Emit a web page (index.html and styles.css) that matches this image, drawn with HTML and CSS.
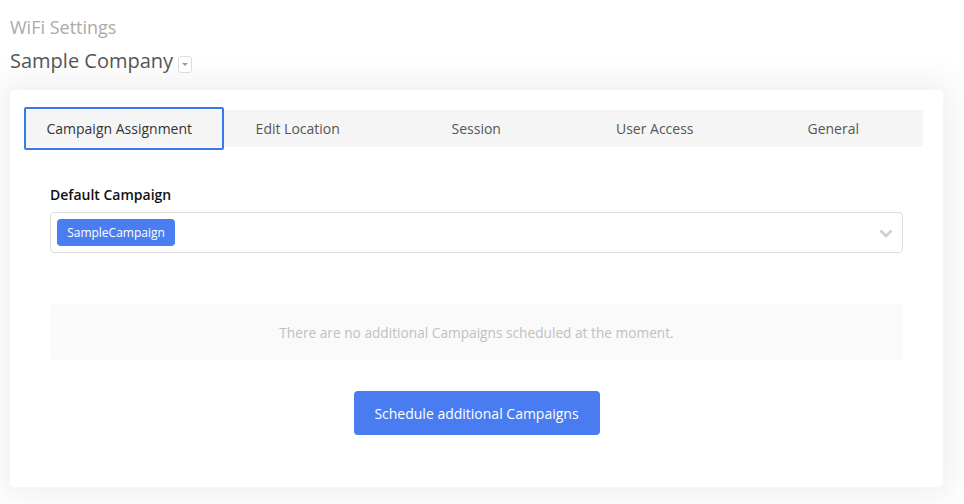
FILE: index.html
```html
<!DOCTYPE html>
<html lang="en">
<head>
    <meta charset="UTF-8">
    <meta name="viewport" content="width=device-width, initial-scale=1.0">
    <title>WiFi Settings</title>
    <link rel="stylesheet" href="styles.css">
</head>
<body>
    <header class="page-head">
        <h1 class="page-title">WiFi Settings</h1>
        <div class="company">
            <span class="company-name">Sample Company</span>
            <button class="company-toggle" type="button" aria-label="Change company"></button>
        </div>
    </header>
    <main class="card">
        <nav class="tabs">
            <a class="tab active" href="#">Campaign Assignment</a>
            <a class="tab" href="#">Edit Location</a>
            <a class="tab" href="#">Session</a>
            <a class="tab" href="#">User Access</a>
            <a class="tab" href="#">General</a>
        </nav>
        <section class="campaign">
            <label class="field-label">Default Campaign</label>
            <div class="select">
                <span class="tag">SampleCampaign</span>
                <svg class="chevron" width="14" height="9" viewBox="0 0 14 9">
                    <path d="M1.5 1.5 L7 7 L12.5 1.5" fill="none" stroke="#cfcfcf" stroke-width="2.6"/>
                </svg>
            </div>
            <p class="empty">There are no additional Campaigns scheduled at the moment.</p>
            <div class="actions">
                <button class="btn-primary" type="button">Schedule additional Campaigns</button>
            </div>
        </section>
    </main>
</body>
</html>
```

FILE: styles.css
```css
* {
  padding: 0;
  margin: 0;
  box-sizing: border-box;
}
html {
  font-family: 'Open Sans', 'Liberation Sans', sans-serif;
  color: #555;
  background-color: #fff;
}
body {
  width: 964px;
  height: 504px;
  overflow: hidden;
  padding: 0 10px;
}
.page-head {
  padding-top: 15px;
}
.page-title {
  font-size: 18px;
  font-weight: 400;
  color: #aaa;
  line-height: 24px;
}
.company {
  display: flex;
  align-items: center;
  margin-top: 8px;
  height: 28px;
}
.company-name {
  font-size: 20px;
  color: #555;
  line-height: 28px;
}
.company-toggle {
  width: 14px;
  height: 17px;
  margin: 6px 0 0 5px;
  border: 1px solid #ddd;
  border-radius: 3px;
  background: #fff;
  position: relative;
}
.company-toggle::after {
  content: '';
  position: absolute;
  left: 3px;
  top: 6px;
  border-left: 3px solid transparent;
  border-right: 3px solid transparent;
  border-top: 3px solid #999;
}
.card {
  margin-top: 15px;
  width: 933px;
  height: 397px;
  background-color: #fff;
  border-radius: 5px;
  box-shadow: 0 0 30px 12px rgba(0, 0, 0, 0.055);
  padding: 20px 20px 0 14px;
}
.tabs {
  display: grid;
  grid-template-columns: repeat(5, 178.5px);
  height: 37px;
  padding-left: 6px;
  background-color: #f5f5f5;
}
.tab {
  position: relative;
  display: flex;
  align-items: center;
  justify-content: center;
  font-size: 14px;
  color: #555;
  text-decoration: none;
}
.tab.active {
  color: #333;
}
.tab.active::after {
  /* focus ring sits over the bar */
  content: '';
  position: absolute;
  top: -3px;
  bottom: -3px;
  left: -6px;
  right: -15px;
  border: 2px solid #3a78f2;
  border-radius: 2px;
}
.campaign {
  padding: 0 20px 0 26px;
}
.field-label {
  display: block;
  margin-top: 38px;
  font-size: 14px;
  font-weight: 600;
  color: #111;
  line-height: 20px;
}
.select {
  display: flex;
  align-items: center;
  justify-content: space-between;
  margin-top: 7px;
  height: 41px;
  padding: 0 9px 0 6px;
  border: 1px solid #ddd;
  border-radius: 4px;
}
.tag {
  display: inline-flex;
  align-items: center;
  justify-content: center;
  width: 118px;
  height: 27px;
  font-size: 12px;
  color: #fff;
  background-color: #4a7ef0;
  border-radius: 4px;
}
.chevron {
  margin-top: 2px;
}
.empty {
  margin-top: 51px;
  height: 56px;
  display: flex;
  align-items: center;
  justify-content: center;
  font-size: 13.7px;
  color: #c0c0c0;
  background-color: #fafafa;
  border-radius: 3px;
}
.actions {
  display: flex;
  justify-content: center;
  margin-top: 31px;
}
.btn-primary {
  width: 246px;
  height: 44px;
  border: none;
  border-radius: 4px;
  background-color: #487cf0;
  color: #fff;
  font-family: inherit;
  font-size: 14px;
}
```
